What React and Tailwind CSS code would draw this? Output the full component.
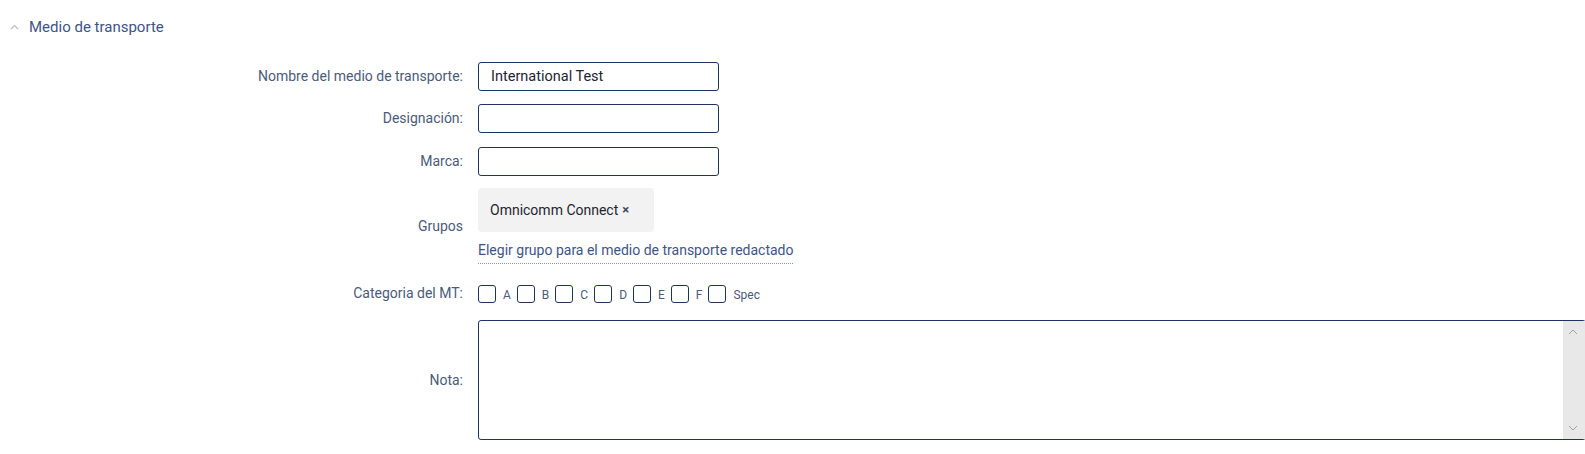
import React, { useState } from "react";

const categories = ["A", "B", "C", "D", "E", "F", "Spec"];

function Row({ label, children, className = "" }) {
  return (
    <div className={`flex items-center ${className}`}>
      <div className="w-[463px] shrink-0 text-right text-[14px] text-[#4b5b7a]">{label}</div>
      <div className="ml-[15px] flex-1">{children}</div>
    </div>
  );
}

function TextInput({ value }) {
  return (
    <input
      defaultValue={value}
      className="h-[29px] w-[241px] rounded-[3px] border border-[#1c355e] bg-white px-[12px] text-[14.5px] text-[#1e2536] outline-none"
    />
  );
}

export default function App() {
  const [checked, setChecked] = useState({});

  return (
    <div className="h-[454px] w-[1585px] overflow-hidden bg-white font-['Roboto',sans-serif]">
      <div className="flex items-center pl-[10px] pt-[16px]">
        <svg width="9" height="6" viewBox="0 0 9 6" className="mr-[10px]">
          <path d="M1 5 L4.5 1.5 L8 5" fill="none" stroke="#b8bcc4" strokeWidth="1.2" />
        </svg>
        <span className="text-[15px] leading-[22px] text-[#3e5588]">Medio de transporte</span>
      </div>

      <div className="mt-[24px] flex flex-col">
        <Row label="Nombre del medio de transporte:">
          <TextInput value="International Test" />
        </Row>
        <Row label="Designación:" className="mt-[13px]">
          <TextInput value="" />
        </Row>
        <Row label="Marca:" className="mt-[14px]">
          <TextInput value="" />
        </Row>

        <Row label="Grupos" className="mt-[12px]">
          <div className="flex flex-col items-start">
            <div className="flex h-[44px] items-center rounded-[4px] bg-[#f2f2f2] pl-[12px] pr-[25px] text-[14px] text-[#1f2430]">
              Omnicomm Connect
              <span className="ml-[4px] text-[13px] font-bold text-[#3c4656]">×</span>
            </div>
            <div className="mt-[8px] border-b border-dotted border-[#8a96ab] pb-[3px] text-[14px] leading-[20px] text-[#3e5588]">
              Elegir grupo para el medio de transporte redactado
            </div>
          </div>
        </Row>

        <Row label="Categoria del MT:" className="mt-[19px]">
          <div className="flex items-center">
            {categories.map((c) => (
              <label key={c} className="mr-[6px] flex cursor-pointer items-center">
                <input
                  type="checkbox"
                  checked={!!checked[c]}
                  onChange={() => setChecked((p) => ({ ...p, [c]: !p[c] }))}
                  className="peer sr-only"
                />
                <span className="h-[18px] w-[18px] rounded-[3px] border border-[#1c355e] bg-white peer-checked:bg-[#1c355e]" />
                <span className="ml-[7px] pt-[2px] text-[12px] leading-[18px] text-[#4b5b7a]">{c}</span>
              </label>
            ))}
          </div>
        </Row>

        <Row label="Nota:" className="mt-[16px]">
          <div className="flex h-[120px] w-[1108px] rounded-[3px] border border-[#1c355e] bg-white">
            <textarea className="h-full flex-1 resize-none bg-transparent px-[10px] py-[6px] text-[14px] outline-none" />
            <div className="flex w-[22px] flex-col items-center justify-between bg-[#e8e8e8] py-[8px] pr-[2px]">
              <svg width="10" height="6" viewBox="0 0 10 6">
                <path d="M1 5 L5 1 L9 5" fill="none" stroke="#a0a0a0" strokeWidth="1" />
              </svg>
              <svg width="10" height="6" viewBox="0 0 10 6">
                <path d="M1 1 L5 5 L9 1" fill="none" stroke="#a0a0a0" strokeWidth="1" />
              </svg>
            </div>
          </div>
        </Row>
      </div>
    </div>
  );
}
